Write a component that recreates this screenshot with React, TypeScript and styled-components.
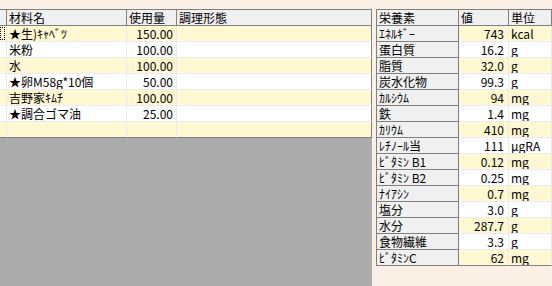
import React from "react";
import styled, { createGlobalStyle } from "styled-components";

const GlobalStyle = createGlobalStyle`
  html, body { margin: 0; padding: 0; }
  body {
    background: #faf0e6;
    font-family: "Noto Sans CJK JP", "Noto Sans", sans-serif;
    font-size: 12px;
    color: #000;
  }
`;

const Page = styled.div`
  display: flex;
  align-items: flex-start;
  padding-top: 9px;
  height: 286px;
  box-sizing: border-box;
  overflow: hidden;
`;

const LeftPane = styled.div`
  width: 372px;
  height: 277px;
  background: #ababab;
  display: flex;
  flex-direction: column;
`;

const LeftRow = styled.div<{ $head?: boolean; $alt?: boolean; $last?: boolean }>`
  display: grid;
  grid-template-columns: 7px 120px 50px 195px;
  height: ${(p) => (p.$head ? 17 : 16)}px;
  box-sizing: border-box;
  border-top: ${(p) => (p.$head ? "1px solid #808080" : "none")};
  background: ${(p) => (p.$head ? "#f0f0f0" : p.$alt ? "#fff8d2" : "#ffffff")};
`;

const LCell = styled.div<{ $head?: boolean; $right?: boolean; $last?: boolean; $edge?: boolean }>`
  box-sizing: border-box;
  border-right: 1px solid ${(p) => (p.$head || p.$edge ? "#808080" : "#ebebeb")};
  border-bottom: 1px solid ${(p) => (p.$head || p.$last ? "#808080" : "#ebebeb")};
  padding: 0 ${(p) => (p.$right ? "3px" : "2px")};
  line-height: 15px;
  text-align: ${(p) => (p.$right ? "right" : "left")};
  white-space: nowrap;
  overflow: hidden;
  position: relative;
`;

const Focus = styled.span`
  position: absolute;
  left: 0;
  top: 1px;
  width: 5px;
  height: 13px;
  box-sizing: border-box;
  border: 1px dotted #000;
`;

const RightPane = styled.div`
  margin-left: 4px;
  flex: 1;
  display: flex;
  flex-direction: column;
`;

const RightRow = styled.div<{ $head?: boolean }>`
  display: grid;
  grid-template-columns: 83px 50px 1fr;
  height: ${(p) => (p.$head ? 17 : 16)}px;
  box-sizing: border-box;
  border-top: ${(p) => (p.$head ? "1px solid #808080" : "none")};
`;

const RCell = styled.div<{
  $fixed?: boolean;
  $head?: boolean;
  $alt?: boolean;
  $right?: boolean;
  $last?: boolean;
}>`
  box-sizing: border-box;
  background: ${(p) => (p.$fixed || p.$head ? "#f0f0f0" : p.$alt ? "#fff8d2" : "#ffffff")};
  border-left: ${(p) => (p.$fixed ? "1px solid #808080" : "none")};
  border-right: 1px solid ${(p) => (p.$fixed || p.$head ? "#808080" : "#ebebeb")};
  border-bottom: 1px solid ${(p) => (p.$fixed || p.$head || p.$last ? "#808080" : "#ebebeb")};
  padding: 0 ${(p) => (p.$right ? "4px" : "2px")};
  line-height: 15px;
  text-align: ${(p) => (p.$right ? "right" : "left")};
  white-space: nowrap;
  overflow: hidden;
`;

const ingredients: [string, string][] = [
  ["★生)ｷｬﾍﾞﾂ", "150.00"],
  ["米粉", "100.00"],
  ["水", "100.00"],
  ["★卵M58g*10個", "50.00"],
  ["吉野家ｷﾑﾁ", "100.00"],
  ["★調合ゴマ油", "25.00"],
  ["", ""],
];

const nutrients: [string, string, string][] = [
  ["ｴﾈﾙｷﾞｰ", "743", "kcal"],
  ["蛋白質", "16.2", "g"],
  ["脂質", "32.0", "g"],
  ["炭水化物", "99.3", "g"],
  ["ｶﾙｼｳﾑ", "94", "mg"],
  ["鉄", "1.4", "mg"],
  ["ｶﾘｳﾑ", "410", "mg"],
  ["ﾚﾁﾉｰﾙ当", "111", "μgRA"],
  ["ﾋﾞﾀﾐﾝ B1", "0.12", "mg"],
  ["ﾋﾞﾀﾐﾝ B2", "0.25", "mg"],
  ["ﾅｲｱｼﾝ", "0.7", "mg"],
  ["塩分", "3.0", "g"],
  ["水分", "287.7", "g"],
  [" 食物繊維", "3.3", "g"],
  ["ﾋﾞﾀﾐﾝC", "62", "mg"],
];

export default function App() {
  return (
    <>
      <GlobalStyle />
      <Page>
        <LeftPane>
          <LeftRow $head>
            <LCell $head />
            <LCell $head>材料名</LCell>
            <LCell $head>使用量</LCell>
            <LCell $head>調理形態</LCell>
          </LeftRow>
          {ingredients.map(([name, qty], i) => {
            const last = i === ingredients.length - 1;
            return (
              <LeftRow key={i} $alt={i % 2 === 0}>
                <LCell $last={last}>{i === 0 && <Focus />}</LCell>
                <LCell $last={last}>{name}</LCell>
                <LCell $last={last} $right>
                  {qty}
                </LCell>
                <LCell $last={last} $edge />
              </LeftRow>
            );
          })}
        </LeftPane>
        <RightPane>
          <RightRow $head>
            <RCell $fixed>栄養素</RCell>
            <RCell $head>値</RCell>
            <RCell $head>単位</RCell>
          </RightRow>
          {nutrients.map(([n, v, u], i) => {
            const last = i === nutrients.length - 1;
            const alt = i % 2 === 0;
            return (
              <RightRow key={n}>
                <RCell $fixed>{n}</RCell>
                <RCell $alt={alt} $right $last={last}>
                  {v}
                </RCell>
                <RCell $alt={alt} $last={last}>
                  {u}
                </RCell>
              </RightRow>
            );
          })}
        </RightPane>
      </Page>
    </>
  );
}
